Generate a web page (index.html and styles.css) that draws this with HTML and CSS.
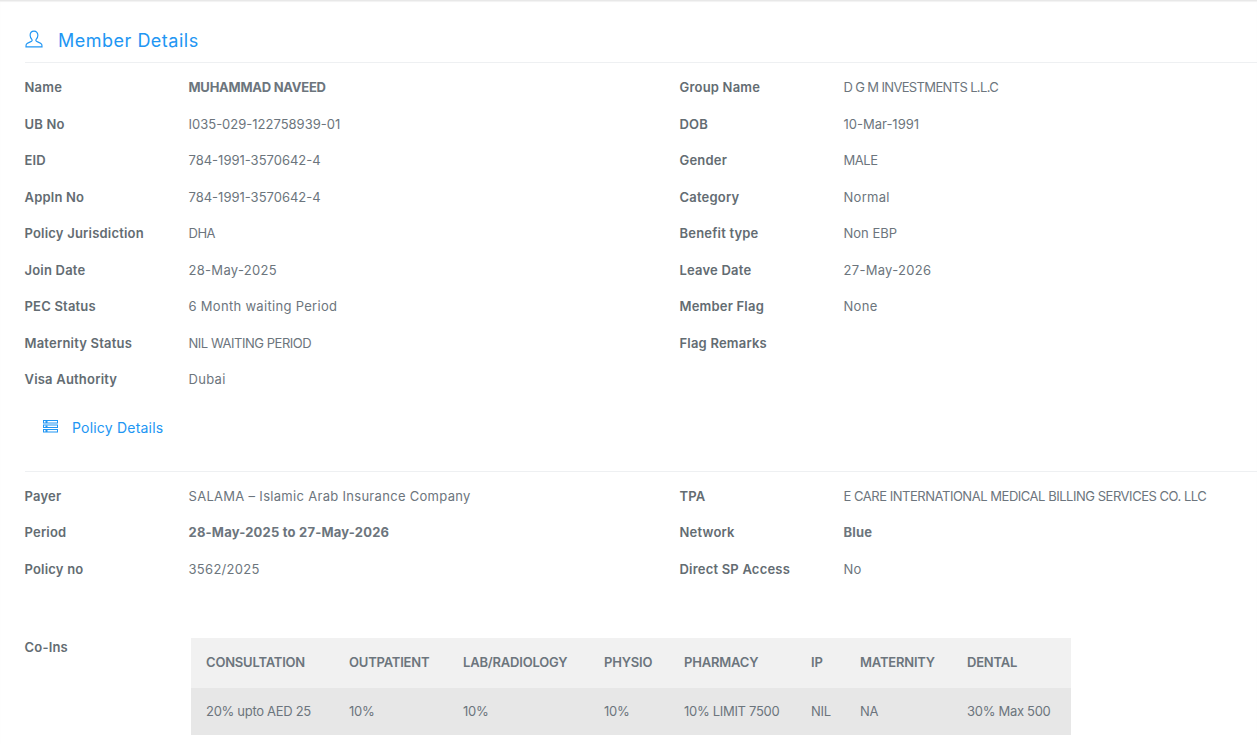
FILE: index.html
```html
<!DOCTYPE html>
<html lang="en">
<head>
<meta charset="utf-8">
<title>Member Details</title>
<link rel="stylesheet" href="styles.css">
</head>
<body>
<main class="page">
  <h2 class="section-title member-title">
    <svg class="icon-user" width="18" height="18" viewBox="0 0 20 20" fill="none" stroke="currentColor" stroke-width="1.300"><path d="M10 1.200c-2.700 0-4.300 2-4.300 4.600 0 2 .9 3.600 1.900 4.600.4.500.4 1.500-.1 2-.9.9-5 1.700-6 3.400-.3.600-.4 1.500-.4 3h17.800c0-1.500-.1-2.400-.4-3-1-1.700-5.100-2.500-6-3.400-.5-.5-.5-1.500-.1-2 1-1 1.900-2.600 1.900-4.600 0-2.600-1.600-4.600-4.300-4.600z"/></svg>
    <span>Member Details</span>
  </h2>
  <section class="details member-details">
    <div class="row"><span class="label">Name</span><span class="value strong caps-slight">MUHAMMAD NAVEED</span><span class="label">Group Name</span><span class="value caps-tight">D G M INVESTMENTS L.L.C</span></div>
    <div class="row"><span class="label">UB No</span><span class="value num">I035-029-122758939-01</span><span class="label">DOB</span><span class="value num">10-Mar-1991</span></div>
    <div class="row"><span class="label">EID</span><span class="value num">784-1991-3570642-4</span><span class="label">Gender</span><span class="value caps">MALE</span></div>
    <div class="row"><span class="label">Appln No</span><span class="value num">784-1991-3570642-4</span><span class="label">Category</span><span class="value">Normal</span></div>
    <div class="row"><span class="label">Policy Jurisdiction</span><span class="value caps">DHA</span><span class="label">Benefit type</span><span class="value num">Non EBP</span></div>
    <div class="row"><span class="label">Join Date</span><span class="value">28-May-2025</span><span class="label">Leave Date</span><span class="value">27-May-2026</span></div>
    <div class="row"><span class="label">PEC Status</span><span class="value">6 Month waiting Period</span><span class="label">Member Flag</span><span class="value">None</span></div>
    <div class="row"><span class="label">Maternity Status</span><span class="value caps">NIL WAITING PERIOD</span><span class="label">Flag Remarks</span><span class="value"></span></div>
    <div class="row"><span class="label">Visa Authority</span><span class="value">Dubai</span></div>
  </section>
  <h3 class="section-title policy-title">
    <svg class="icon-list" width="15" height="13" viewBox="0 0 15 13" fill="none" stroke="currentColor"><rect x="0.500" y="0.500" width="14" height="2.500"/><rect x="0.500" y="5" width="14" height="2.500"/><rect x="0.500" y="9.500" width="14" height="2.500"/><path d="M3.500 1v2M3.500 5.500v2M3.500 10v2" stroke-width="2"/></svg>
    <span>Policy Details</span>
  </h3>
  <section class="details policy-details">
    <div class="row"><span class="label">Payer</span><span class="value">SALAMA – Islamic Arab Insurance Company</span><span class="label">TPA</span><span class="value caps">E CARE INTERNATIONAL MEDICAL BILLING SERVICES CO. LLC</span></div>
    <div class="row"><span class="label">Period</span><span class="value strong">28-May-2025 to 27-May-2026</span><span class="label">Network</span><span class="value strong">Blue</span></div>
    <div class="row"><span class="label">Policy no</span><span class="value">3562/2025</span><span class="label">Direct SP Access</span><span class="value">No</span></div>
  </section>
  <section class="coins">
    <span class="label coins-label">Co-Ins</span>
    <table class="coins-table">
      <colgroup><col class="c1"><col class="c2"><col class="c3"><col class="c4"><col class="c5"><col class="c6"><col class="c7"><col class="c8"></colgroup>
      <thead><tr><th>CONSULTATION</th><th>OUTPATIENT</th><th>LAB/RADIOLOGY</th><th>PHYSIO</th><th>PHARMACY</th><th>IP</th><th>MATERNITY</th><th>DENTAL</th></tr></thead>
      <tbody><tr><td>20% upto AED 25</td><td>10%</td><td>10%</td><td>10%</td><td>10% LIMIT 7500</td><td>NIL</td><td>NA</td><td>30% Max 500</td></tr></tbody>
    </table>
  </section>
</main>
</body>
</html>
```
FILE: styles.css
```css
html, body { margin: 0; height: 100%; overflow: hidden; background: #fff; }
body { font-family: Inter, "Noto Sans", sans-serif; font-size: 13px; color: #6c757d; }
.page { height: 744px; box-sizing: border-box; border-top: 1px solid #e8e8e8; box-shadow: inset 0 1px 1px #f2f2f2; padding: 21px 0 0 24.500px; overflow: hidden; }
.section-title { margin: 0; display: flex; align-items: center; color: #2196f3; font-weight: 400; }
.member-title { height: 40px; font-size: 18px; letter-spacing: 0.5px; border-bottom: 1px solid #eef0f2; }
.member-title span { position: relative; top: -2px; }
.icon-user { margin: 0 15px 0 0.500px; position: relative; top: -3px; }
.member-details { padding-top: 6px; }
.row { display: grid; grid-template-columns: 164px 491px 164px 1fr; height: 36.5px; align-items: center; }
.label { font-weight: 600; color: #636c72; letter-spacing: 0.2px; }
.value { font-weight: 400; letter-spacing: 0.3px; }
.value.strong { font-weight: 700; letter-spacing: 0.2px; }
.value.num { letter-spacing: 0; }
.value.caps { letter-spacing: -0.47px; }
.value.caps-tight { letter-spacing: -0.65px; }
.value.strong.caps-slight { letter-spacing: -0.25px; }
.policy-title { margin: 15px 0 0 18.500px; height: 30px; font-size: 14px; letter-spacing: 0.2px; }
.icon-list { margin-right: 14px; position: relative; top: -1px; }
.policy-details { margin-top: 28px; border-top: 1px solid #eef0f2; padding-top: 6px; }
.coins { display: flex; margin-top: 51px; align-items: flex-start; }
.coins-label { width: 166.500px; line-height: 18px; }
.coins-table { border-collapse: collapse; width: 880px; table-layout: fixed; color: #6c757d; }
.coins-table .c1 { width: 143px; }
.coins-table .c2 { width: 114px; }
.coins-table .c3 { width: 141px; }
.coins-table .c4 { width: 80px; }
.coins-table .c5 { width: 127px; }
.coins-table .c6 { width: 49px; }
.coins-table .c7 { width: 107px; }
.coins-table .c8 { width: 119px; }
.coins-table th, .coins-table td { box-sizing: border-box; padding: 0 0 2px 15px; white-space: nowrap; text-align: left; }
.coins-table th { height: 50px; background: #f1f1f1; font-weight: 600; letter-spacing: -0.2px; }
.coins-table td { height: 47px; background: #e7e7e7; letter-spacing: -0.3px; }
```
